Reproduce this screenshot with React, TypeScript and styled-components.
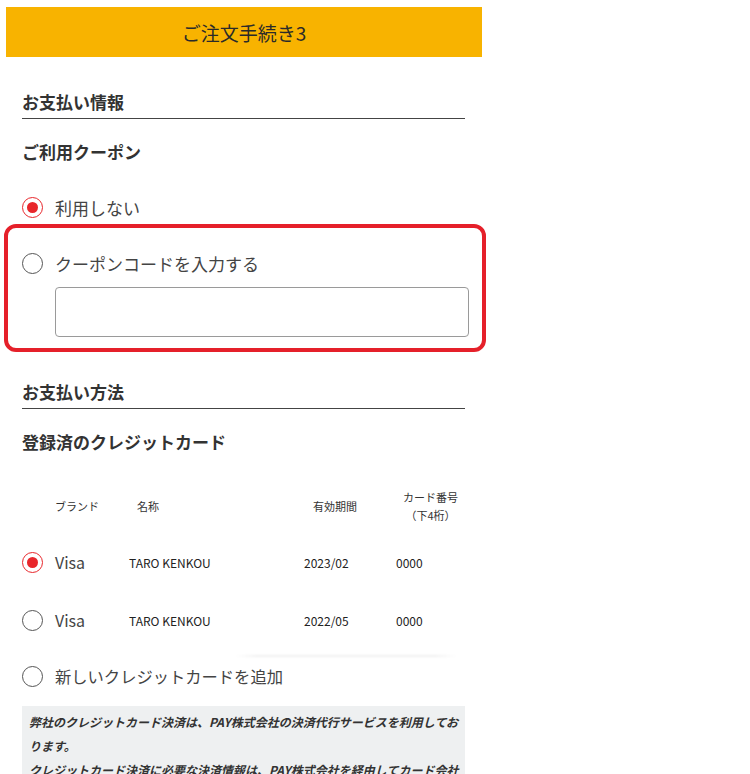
import React from "react";
import styled, { createGlobalStyle } from "styled-components";

const GlobalStyle = createGlobalStyle`
  html, body { margin: 0; padding: 0; background: #fff; }
  body {
    font-family: "Noto Sans CJK JP", "Noto Sans", sans-serif;
    color: #333;
  }
  * { box-sizing: border-box; }
`;

const Page = styled.div`
  width: 476px;
  margin-left: 6px;
  padding-top: 7px;
`;

const Header = styled.header`
  height: 50px;
  background: #f8b300;
  display: flex;
  align-items: center;
  justify-content: center;
  font-size: 19px;
  font-weight: 400;
  color: #2a2a2a;
`;

const Content = styled.main`
  padding: 0 17px 0 16px;
  display: flex;
  flex-direction: column;
`;

const SectionTitle = styled.h2<{ $mt: number }>`
  margin: ${(p) => p.$mt}px 0 0;
  font-size: 17px;
  line-height: 24px;
  font-weight: 700;
  color: #333;
  padding-bottom: 4px;
  border-bottom: 1px solid #444;
`;

const SubTitle = styled.h3`
  margin: 21px 0 0;
  font-size: 17px;
  line-height: 24px;
  font-weight: 700;
  color: #333;
`;

const RadioRow = styled.label<{ $mt?: number; $size?: number }>`
  display: flex;
  align-items: center;
  gap: 12px;
  height: 30px;
  margin-top: ${(p) => p.$mt ?? 0}px;
  font-size: ${(p) => p.$size ?? 17}px;
  color: #444;
`;

const RadioCircle = styled.span<{ $checked?: boolean }>`
  width: 21px;
  height: 21px;
  border-radius: 50%;
  flex: none;
  border: 1.5px solid ${(p) => (p.$checked ? "#e8262b" : "#555")};
  display: flex;
  align-items: center;
  justify-content: center;
  background: #fff;
  &::after {
    content: "";
    width: 11px;
    height: 11px;
    border-radius: 50%;
    background: ${(p) => (p.$checked ? "#e8262b" : "transparent")};
  }
`;

const Highlight = styled.div`
  margin: 2px -21px 0 -18px;
  border: 4px solid #e5202a;
  border-radius: 12px;
  padding: 20px 13px 11px 14px;
  display: flex;
  flex-direction: column;
`;

const CouponInput = styled.input`
  margin: 9px 0 0 33px;
  height: 50px;
  border: 1px solid #9a9a9a;
  border-radius: 4px;
  background: #fff;
  font-size: 16px;
  padding: 0 10px;
  outline: none;
`;

const cols = "33px 74px 175px 92px 1fr";

const TableHead = styled.div`
  display: grid;
  grid-template-columns: ${cols};
  align-items: center;
  margin-top: 34px;
  height: 36px;
  font-size: 11px;
  line-height: 18px;
  color: #333;
`;

const HeadCell = styled.div<{ $pl?: number; $center?: boolean }>`
  padding-left: ${(p) => p.$pl ?? 0}px;
  text-align: ${(p) => (p.$center ? "center" : "left")};
  white-space: nowrap;
`;

const CardRow = styled.label<{ $first?: boolean }>`
  display: grid;
  grid-template-columns: ${cols};
  align-items: center;
  height: 58px;
  margin-top: ${(p) => (p.$first ? 9 : 0)}px;
  font-size: 12px;
  color: #222;
`;

const Brand = styled.span`
  font-size: 16px;
  color: #444;
`;

const Cell = styled.span`
  white-space: nowrap;
`;

const Separator = styled.div`
  margin: 6px 8px 0 213px;
  height: 2px;
  background: linear-gradient(
    to right,
    rgba(0, 0, 0, 0),
    rgba(0, 0, 0, 0.06) 10%,
    rgba(0, 0, 0, 0.06) 90%,
    rgba(0, 0, 0, 0)
  );
  filter: blur(1px);
`;

const Notice = styled.div`
  margin-top: 15px;
  background: #eef0f1;
  padding: 4px 7px 10px;
  font-size: 12px;
  line-height: 24px;
  font-weight: 700;
  font-style: italic;
  color: #333;
  white-space: nowrap;
`;

const Radio = ({ checked }: { checked?: boolean }) => <RadioCircle $checked={checked} />;

const cards = [
  { brand: "Visa", name: "TARO KENKOU", exp: "2023/02", num: "0000", checked: true },
  { brand: "Visa", name: "TARO KENKOU", exp: "2022/05", num: "0000", checked: false },
];

export default function App() {
  return (
    <>
      <GlobalStyle />
      <Page>
        <Header>ご注文手続き3</Header>
        <Content>
          <SectionTitle $mt={33}>お支払い情報</SectionTitle>
          <SubTitle>ご利用クーポン</SubTitle>
          <RadioRow $mt={28}>
            <Radio checked />
            利用しない
          </RadioRow>
          <Highlight>
            <RadioRow>
              <Radio />
              クーポンコードを入力する
            </RadioRow>
            <CouponInput type="text" />
          </Highlight>

          <SectionTitle $mt={28}>お支払い方法</SectionTitle>
          <SubTitle>登録済のクレジットカード</SubTitle>
          <TableHead>
            <HeadCell />
            <HeadCell>ブランド</HeadCell>
            <HeadCell $pl={8}>名称</HeadCell>
            <HeadCell $pl={9}>有効期間</HeadCell>
            <HeadCell $center>
              カード番号
              <br />
              （下4桁）
            </HeadCell>
          </TableHead>
          {cards.map((c, i) => (
            <CardRow key={i} $first={i === 0}>
              <Radio checked={c.checked} />
              <Brand>{c.brand}</Brand>
              <Cell>{c.name}</Cell>
              <Cell>{c.exp}</Cell>
              <Cell>{c.num}</Cell>
            </CardRow>
          ))}
          <Separator />
          <RadioRow $mt={4} $size={16.3}>
            <Radio />
            新しいクレジットカードを追加
          </RadioRow>
          <Notice>
            弊社のクレジットカード決済は、PAY株式会社の決済代行サービスを利用してお
            <br />
            ります。
            <br />
            クレジットカード決済に必要な決済情報は、PAY株式会社を経由してカード会社
            <br />
            へ送信されます。
          </Notice>
        </Content>
      </Page>
    </>
  );
}
